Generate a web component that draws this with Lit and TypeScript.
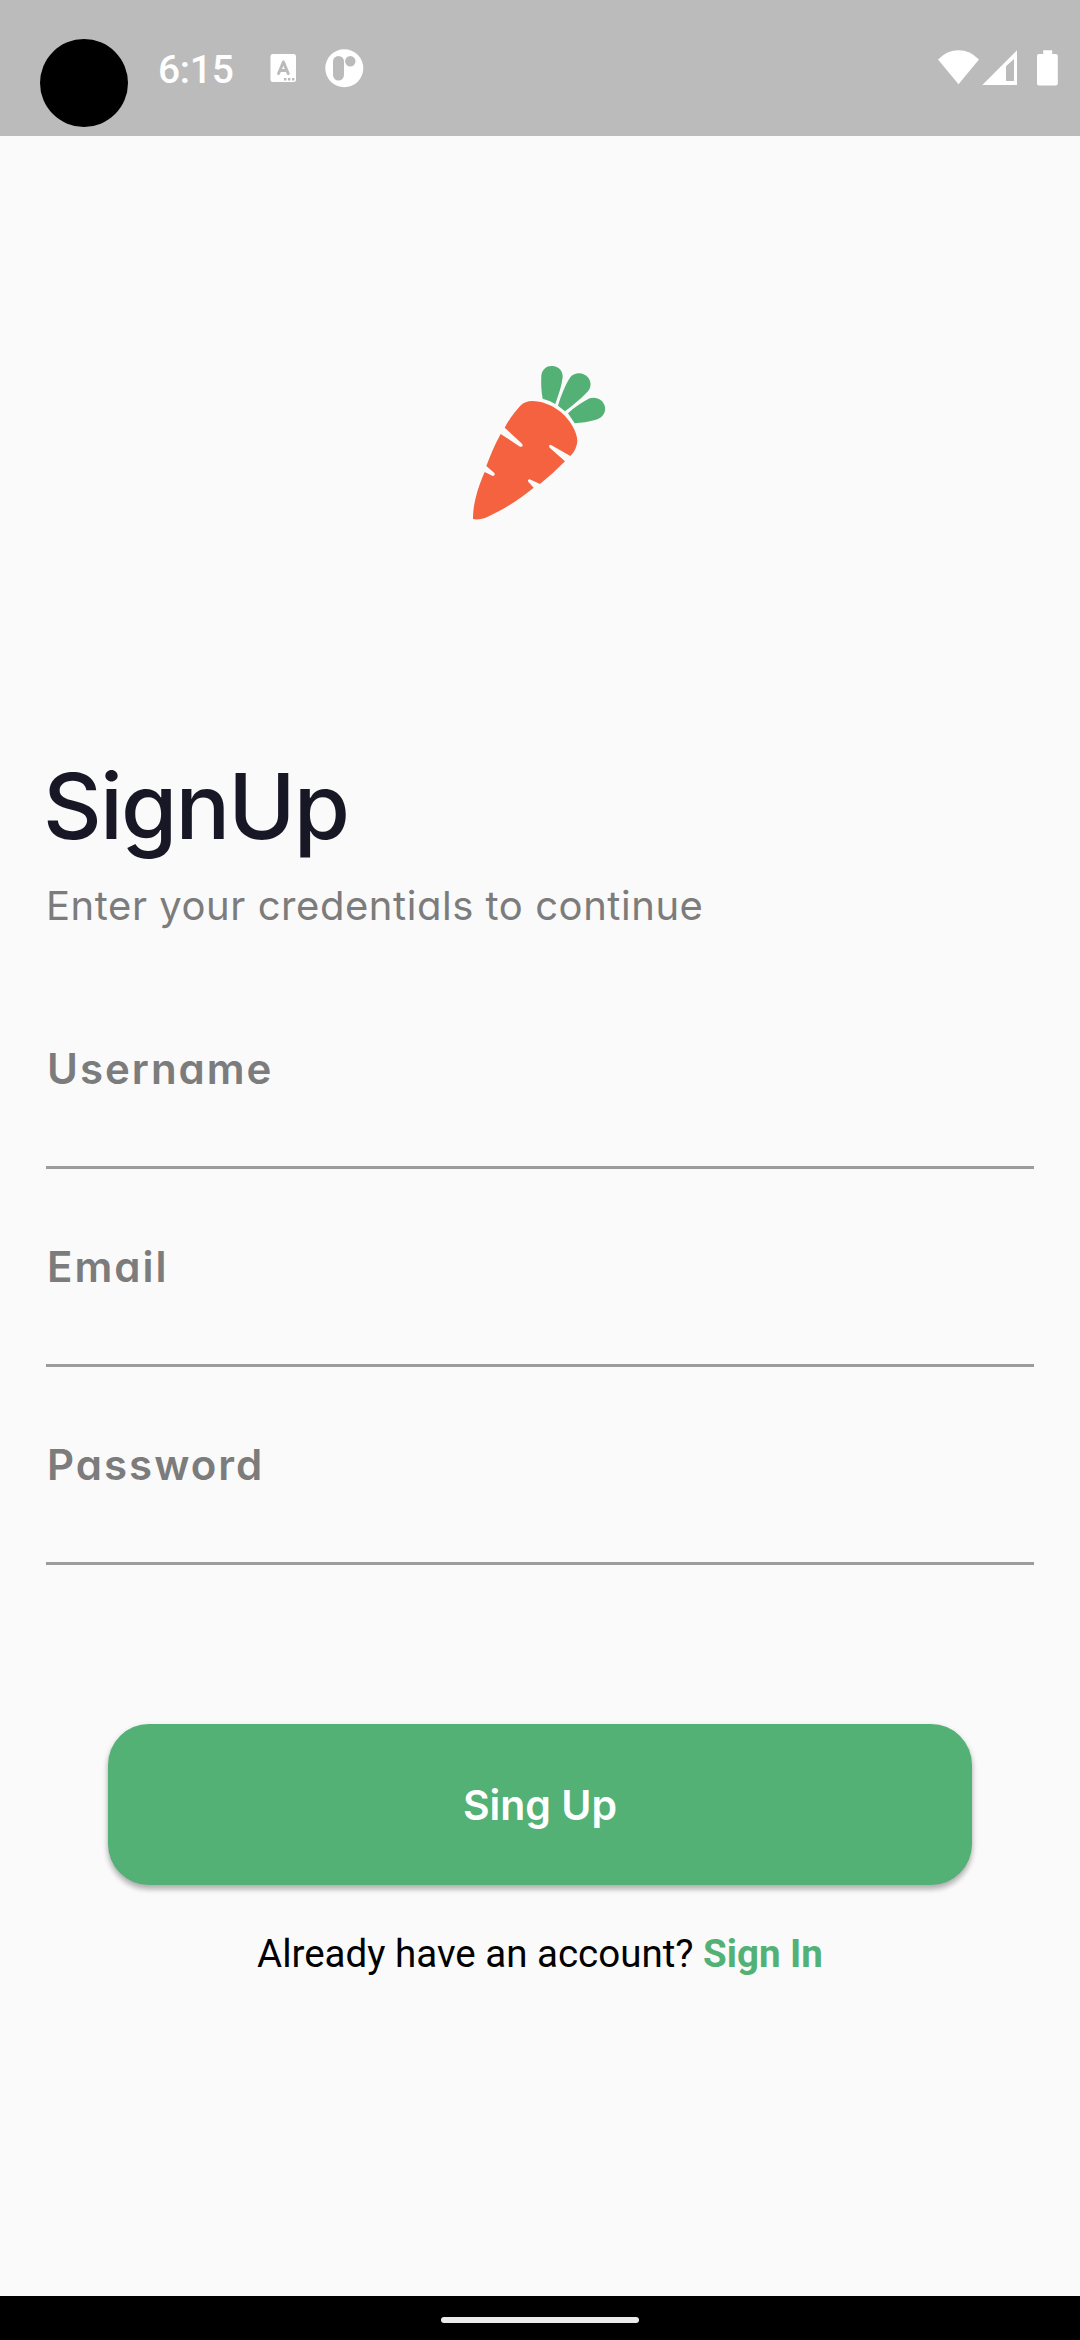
import { LitElement, html, css, svg } from "lit";
import { customElement, property } from "lit/decorators.js";

@customElement("status-bar")
class StatusBar extends LitElement {
  static styles = css`
    :host { display: flex; height: 136px; background: #bbb; color: #fff; font-family: Roboto, sans-serif; box-sizing: border-box; padding-left: 40px; align-items: flex-start; }
    svg { display: block; flex: none; }
    .camera { width: 88px; height: 88px; margin-top: 39px; border-radius: 50%; background: #000; }
    .time { margin: 47px 0 0 30px; width: 76px; font-size: 39px; line-height: 46px; font-weight: 500; letter-spacing: -0.3px; white-space: nowrap; }
    .left { margin: 46px 0 0 34px; }
    .right { margin: 46px 0 0 auto; }
  `;
  render() {
    return html`
      <div class="camera"></div>
      <div class="time">6:15</div>
      <svg class="left" width="98" height="44" viewBox="268 46 98 44">
        <rect x="270.5" y="54" width="25.5" height="28" rx="2.5" fill="#fff" />
        <path d="M278.6 73.5 L283.4 62 L288.2 73.5 M280 70.6 H287" fill="none" stroke="#bbb" stroke-width="3" stroke-linecap="round" stroke-linejoin="round" />
        <path d="M284 78h2.4v2.4H284zM288 78h2.4v2.4H288zM292 78h2.4v2.4H292z" fill="#bbb" />
        <circle cx="344.3" cy="68.3" r="19" fill="#fff" />
        <rect x="333" y="56" width="11" height="24.5" rx="5.5" fill="#bbb" />
        <circle cx="350.3" cy="61.3" r="5.2" fill="#bbb" />
      </svg>
      <svg class="right" width="146" height="44" viewBox="934 46 146 44">
        <g fill="#fff">
          <path d="M938 59.5 Q947 50.3 958.5 50.3 T979 59.5 L958.5 84.3Z" />
          <path fill-rule="evenodd" d="M1017 50.3V85H982.3ZM1014 59L1006 66.3V81H1014Z" />
          <path d="M1043.2 50.3h9V54h3.6a2 2 0 0 1 2 2v27.6a2 2 0 0 1-2 2h-16.8a2 2 0 0 1-2-2V56a2 2 0 0 1 2-2h4.2z" />
        </g>
      </svg>
    `;
  }
}

@customElement("carrot-logo")
class CarrotLogo extends LitElement {
  static styles = css`
    :host { display: block; width: 160px; height: 180px; }
    svg { display: block; }
  `;
  render() {
    return html`<svg width="160" height="180" viewBox="0 0 480 540">
      ${svg`<g fill="#f4623f">
        <path d="M134 233 C148 207 166 183 181 167 Q199 150 227 154 C256 157 282 170 305 188 C331 211 352 246 352 274 Q350 300 331 318 L272 284 Q264 286 269 293 L315 334 Q281 369 240 402 L209 388 Q200 389 206 397 L221 413 C178 449 125 482 75 504 Q54 511 39 507 C38 465 54 410 74 366 L98 378 Q107 378 103 369 L79 348 C91 316 105 283 122 252 L180 290 Q192 291 186 281Z" />
      </g>
      <g fill="#53b175">
        <path d="M248 146 C243 121 243 98 244 76 C247 57 261 47 276 48 C294 47 310 63 308 82 C305 109 295 136 286 162 Q268 151 248 146Z" />
        <path d="M294 167 C304 135 316 103 332 80 C345 65 372 66 385 83 C395 97 394 114 381 127 C361 149 337 167 315 184Z" />
        <path d="M324 190 C344 172 368 155 389 145 C409 138 431 149 435 171 C438 191 425 205 405 210 C384 216 365 218 344 220Z" />
      </g>`}
    </svg>`;
  }
}

@customElement("form-field")
class FormField extends LitElement {
  @property() label = "";
  static styles = css`
    :host { display: flex; flex-direction: column; height: 126px; border-bottom: 3px solid #9c9c9c; box-sizing: border-box; }
    .label { padding: 1px 0 0 1px; font: 600 42px/50px Inter, sans-serif; font-feature-settings: "cv11"; color: #7c7c7c; letter-spacing: 2px; white-space: nowrap; }
  `;
  render() {
    return html`<div class="label">${this.label}</div>`;
  }
}

@customElement("app-root")
class AppRoot extends LitElement {
  static styles = css`
    :host { display: flex; flex-direction: column; width: 1080px; height: 2340px; background: #fafafa; overflow: hidden; }
    main { flex: 1; display: flex; flex-direction: column; padding: 214px 46px 0; }
    carrot-logo { margin-left: 414px; }
    h1 { margin: 226px 0 0 -3px; font: 540 91px/100px Inter, sans-serif; color: #181725; letter-spacing: -1.9px; white-space: nowrap; }
    .subtitle { margin: 25px 0 0; font: 400 40px/50px Inter, sans-serif; font-feature-settings: "cv11"; color: #7c7c7c; letter-spacing: 0.55px; white-space: nowrap; }
    .fields { display: flex; flex-direction: column; gap: 72px; margin-top: 112px; }
    .submit { margin: 159px 62px 0; height: 161px; border: 0; border-radius: 41px; background: #53b175; color: #fff; font: 600 41px/50px Inter, sans-serif; letter-spacing: 0; box-shadow: 0 3px 6px rgba(0,0,0,.22), 0 5px 5px rgba(0,0,0,.13); }
    .account { margin: 46px 0 0; text-align: center; font: 400 38.5px/46px Roboto, sans-serif; color: #000; white-space: nowrap; }
    .link { font-weight: 700; color: #53b175; }
    .nav { height: 44px; background: #000; display: flex; justify-content: center; align-items: center; padding-top: 4px; box-sizing: border-box; }
    .pill { width: 198px; height: 6px; border-radius: 3px; background: #ebebeb; }
  `;
  render() {
    return html`
      <status-bar></status-bar>
      <main>
        <carrot-logo></carrot-logo>
        <h1>SignUp</h1>
        <p class="subtitle">Enter your credentials to continue</p>
        <div class="fields">
          ${["Username", "Email", "Password"].map((l) => html`<form-field label=${l}></form-field>`)}
        </div>
        <button class="submit">Sing Up</button>
        <p class="account">Already have an account? <span class="link">Sign In</span></p>
      </main>
      <div class="nav"><div class="pill"></div></div>
    `;
  }
}
